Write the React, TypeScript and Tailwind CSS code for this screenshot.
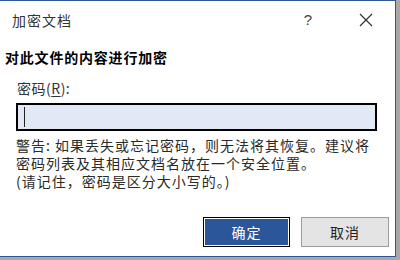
import React from "react";

const cjk = { fontFamily: '"Noto Sans CJK SC", "Noto Sans", sans-serif' };

function CloseIcon() {
  return (
    <svg width="14" height="14" viewBox="0 0 14 14" className="block">
      <path d="M1 1 L13 13 M13 1 L1 13" stroke="#333" strokeWidth="1.2" fill="none" />
    </svg>
  );
}

export default function App() {
  return (
    <div className="w-[400px] h-[260px] bg-[#a8a8a8] overflow-hidden" style={cjk}>
      <div className="w-[396px] h-[257px] bg-white border-t border-r border-b border-[#2b579a] flex flex-col text-[#222]">
        {/* title bar */}
        <div className="flex items-center h-[14px] mt-[12px]">
          <span className="ml-[12px] text-[14px] leading-[14px] tracking-[1px] text-[#333]">加密文档</span>
          <span className="ml-auto mr-[47px] text-[15px] leading-[14px] text-[#444]" style={{ fontFamily: '"Liberation Sans", sans-serif' }}>?</span>
          <span className="mr-[22px]">
            <CloseIcon />
          </span>
        </div>

        <div className="ml-[5px] mt-[23px] text-[14px] leading-[14px] tracking-[0.8px] font-bold text-black">
          对此文件的内容进行加密
        </div>

        <label className="ml-[17px] mt-[17px] text-[14px] leading-[14px] tracking-[0.5px] text-[#333]">
          密码(<span className="underline underline-offset-2">R</span>):
        </label>

        <div className="ml-[16px] mt-[8px] w-[361px] h-[28px] border-2 border-black bg-[#e1e9f7] flex items-center pl-[6px]">
          <div className="w-[1px] h-[20px] bg-[#222]" />
        </div>

        <p className="ml-[16px] mt-[5px] text-[14px] leading-[18px] tracking-[1px] text-[#2a2a2a] whitespace-nowrap">
          警告: 如果丢失或忘记密码，则无法将其恢复。建议将
          <br />
          密码列表及其相应文档名放在一个安全位置。
          <br />
          (请记住，密码是区分大小写的。)
        </p>

        <div className="flex mt-[27px] ml-[203px] gap-[11px]">
          <button className="w-[87px] h-[30px] border border-black bg-[#2b579a] text-white text-[14px] leading-none tracking-[1px] shadow-[inset_0_0_0_1px_#ffffff]">
            确定
          </button>
          <button className="w-[88px] h-[30px] border border-[#9c9c9c] bg-[#e4e4e4] text-[#222] text-[14px] leading-none tracking-[1px]">
            取消
          </button>
        </div>
      </div>
    </div>
  );
}
